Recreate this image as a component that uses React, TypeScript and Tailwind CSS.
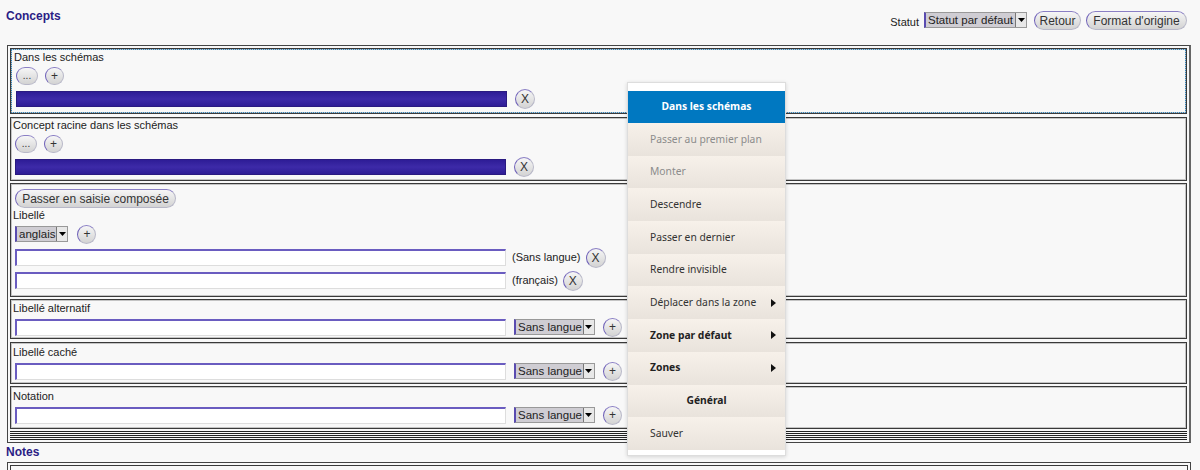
import React from 'react';

const sans = { fontFamily: '"Liberation Sans", Arial, sans-serif' };
const menuFont = { fontFamily: '"Noto Sans", "Open Sans", sans-serif' };

function Pill({ children, className = '' }: { children: React.ReactNode; className?: string }) {
  return (
    <div
      className={`flex items-center justify-center whitespace-nowrap rounded-full border border-[#b8b8c8] border-l-[#6d5fb8] border-t-[#8a7fc4] bg-linear-to-b from-[#f6f6f6] to-[#d3d3d3] text-[#333] ${className}`}
    >
      {children}
    </div>
  );
}

function Select({ label, className = '' }: { label: string; className?: string }) {
  return (
    <div
      className={`flex h-[16px] items-stretch border border-[#999] border-l-2 border-l-[#5a4bb0] bg-[#cfcdd3] text-[11.5px] leading-[14px] text-[#222] ${className}`}
    >
      <span className="flex-1 whitespace-nowrap pl-[2px] pr-[1px]">{label}</span>
      <span className="flex w-[11px] shrink-0 items-center justify-center border-l border-[#777] bg-[#e8e8e8]">
        <svg width="7" height="4" viewBox="0 0 7 4">
          <path d="M0 0h7L3.5 4z" fill="#000" />
        </svg>
      </span>
    </div>
  );
}

function Input({ className = '' }: { className?: string }) {
  return (
    <div
      className={`h-[17px] w-[491px] shrink-0 border-l-2 border-t-2 border-r border-b border-l-[#6a5cc0] border-t-[#6a5cc0] border-r-[#ddd] border-b-[#ddd] bg-white ${className}`}
    />
  );
}

function Row({ className, children }: { className: string; children: React.ReactNode }) {
  return (
    <div className={`border border-[#3a3a3a] shadow-[inset_0_0_0_1px_#c4c4c4] ${className}`}>
      {children}
    </div>
  );
}

function Label({ text, className = '' }: { text: string; className?: string }) {
  return <div className={`pl-[2px] text-[11px] leading-[13px] text-[#222] ${className}`}>{text}</div>;
}

function ChooserRow({ label, dotted }: { label: string; dotted?: boolean }) {
  return (
    <div className={`h-full ${dotted ? 'border border-dotted border-[#2f86c0]' : ''}`}>
      <Label text={label} className="pt-[1px]" />
      <div className="ml-[4px] mt-[3px] flex h-[18px] items-center gap-[7px]">
        <Pill className="h-[18px] w-[22px] text-[10px] leading-none">...</Pill>
        <Pill className="h-[18px] w-[19px] text-[12px] leading-none">+</Pill>
      </div>
      <div className="ml-[4px] mt-[4px] flex h-[20px] items-center">
        <div className="h-[16px] w-[491px] border border-[#2a1a80] bg-linear-to-b from-[#2e1c96] via-[#3d2aa8] to-[#2e1c96]" />
        <Pill className="ml-[8px] h-[20px] w-[20px] text-[12px]">X</Pill>
      </div>
    </div>
  );
}

function MenuItem({
  text,
  tone = 'normal',
  arrow,
  center,
}: {
  text: string;
  tone?: 'muted' | 'normal' | 'bold';
  arrow?: boolean;
  center?: boolean;
}) {
  const color =
    tone === 'muted' ? 'text-[#8c8c8c]' : tone === 'bold' ? 'font-bold text-[#222]' : 'text-[#333]';
  return (
    <div
      className={`flex h-[32.7px] items-center bg-linear-to-b from-[#f7f1ea] to-[#e9e3dc] pl-[22px] pr-[8px] text-[10.3px] ${color}`}
    >
      <span className={center ? 'flex-1 pr-[14px] text-center' : 'flex-1'}>{text}</span>
      {arrow && (
        <svg width="5" height="8" viewBox="0 0 5 8" className="mr-[1px]">
          <path d="M0 0l5 4-5 4z" fill="#111" />
        </svg>
      )}
    </div>
  );
}

export default function App() {
  return (
    <div className="relative h-[470px] w-[1200px] overflow-hidden bg-[#f8f8f8]" style={sans}>
      <div className="flex h-[45px] justify-between">
        <div className="pl-[6px] pt-[7px] text-[12px] font-bold text-[#2b1d85]">Concepts</div>
        <div className="flex items-start gap-[5px] pr-[13px] pt-[11px]">
          <span className="pt-[3px] text-[11px] text-[#222]">Statut</span>
          <Select label="Statut par défaut" className="mt-[1px] min-w-[103px]" />
          <Pill className="ml-[2px] h-[19px] w-[47px] text-[12px]">Retour</Pill>
          <Pill className="h-[19px] w-[101px] text-[12px]">Format d'origine</Pill>
        </div>
      </div>

      <div className="ml-[7px] w-[1184px] border border-[#444] border-r-2 border-r-[#666] p-[2px]">
        <Row className="h-[66px]">
          <ChooserRow label="Dans les schémas" dotted />
        </Row>
        <Row className="mt-[3px] h-[64px]">
          <ChooserRow label="Concept racine dans les schémas" />
        </Row>
        <Row className="mt-[2px] h-[114px]">
          <Pill className="ml-[4px] mt-[5px] h-[19px] w-[161px] text-[12px]">Passer en saisie composée</Pill>
          <Label text="Libellé" className="mt-[1px]" />
          <div className="ml-[4px] mt-[3px] flex h-[18px] items-center">
            <Select label="anglais" className="min-w-[52px]" />
            <Pill className="ml-[9px] h-[19px] w-[19px] text-[12px]">+</Pill>
          </div>
          <div className="ml-[4px] mt-[5px] flex h-[19px] items-center">
            <Input />
            <span className="ml-[6px] text-[11px] text-[#222]">(Sans langue)</span>
            <Pill className="ml-[5px] h-[20px] w-[20px] text-[12px]">X</Pill>
          </div>
          <div className="ml-[4px] mt-[4px] flex h-[19px] items-center">
            <Input />
            <span className="ml-[6px] text-[11px] text-[#222]">(français)</span>
            <Pill className="ml-[5px] h-[20px] w-[20px] text-[12px]">X</Pill>
          </div>
        </Row>
        {[
          { label: 'Libellé alternatif', cls: 'mt-[2px] h-[40px]', pt: 'pt-[2px]' },
          { label: 'Libellé caché', cls: 'mt-[3px] h-[42px]', pt: 'pt-[3px]' },
          { label: 'Notation', cls: 'mt-[2px] h-[43px]', pt: 'pt-[3px]' },
        ].map((r) => (
          <Row key={r.label} className={r.cls}>
            <Label text={r.label} className={r.pt} />
            <div className="ml-[4px] mt-[2px] flex h-[20px] items-center">
              <Input />
              <Select label="Sans langue" className="ml-[8px] min-w-[80px]" />
              <Pill className="ml-[8px] h-[19px] w-[19px] text-[12px]">+</Pill>
            </div>
          </Row>
        ))}
        <div className="mt-[2px] flex flex-col gap-[1px]">
          <div className="h-0 border-t border-[#222]" />
          <div className="h-0 border-t border-[#222]" />
          <div className="h-0 border-t border-[#222]" />
          <div className="h-0 border-t border-[#222]" />
          <div className="h-0 border-t border-[#222]" />
        </div>
      </div>

      <div className="pl-[6px] pt-[2px] text-[12px] font-bold leading-[15px] text-[#2b1d85]">Notes</div>
      <div className="ml-[7px] mt-[2px] w-[1184px] border border-[#444] p-[2px]">
        <div className="h-[20px] border border-[#3a3a3a]">
          <Label text="Note" className="pt-[2px]" />
        </div>
      </div>

      <div
        className="absolute left-[627px] top-[82px] w-[159px] border border-[#ddd] bg-white pb-[5px] pt-[8px] shadow-[0_1px_4px_rgba(0,0,0,0.15)]"
        style={menuFont}
      >
        <div className="flex h-[32px] items-center justify-center bg-[#0078c1] text-[10.3px] font-bold text-white">
          Dans les schémas
        </div>
        <MenuItem text="Passer au premier plan" tone="muted" />
        <MenuItem text="Monter" tone="muted" />
        <MenuItem text="Descendre" />
        <MenuItem text="Passer en dernier" />
        <MenuItem text="Rendre invisible" />
        <MenuItem text="Déplacer dans la zone" arrow />
        <MenuItem text="Zone par défaut" tone="bold" arrow />
        <MenuItem text="Zones" tone="bold" arrow />
        <MenuItem text="Général" tone="bold" center />
        <MenuItem text="Sauver" />
      </div>
    </div>
  );
}
